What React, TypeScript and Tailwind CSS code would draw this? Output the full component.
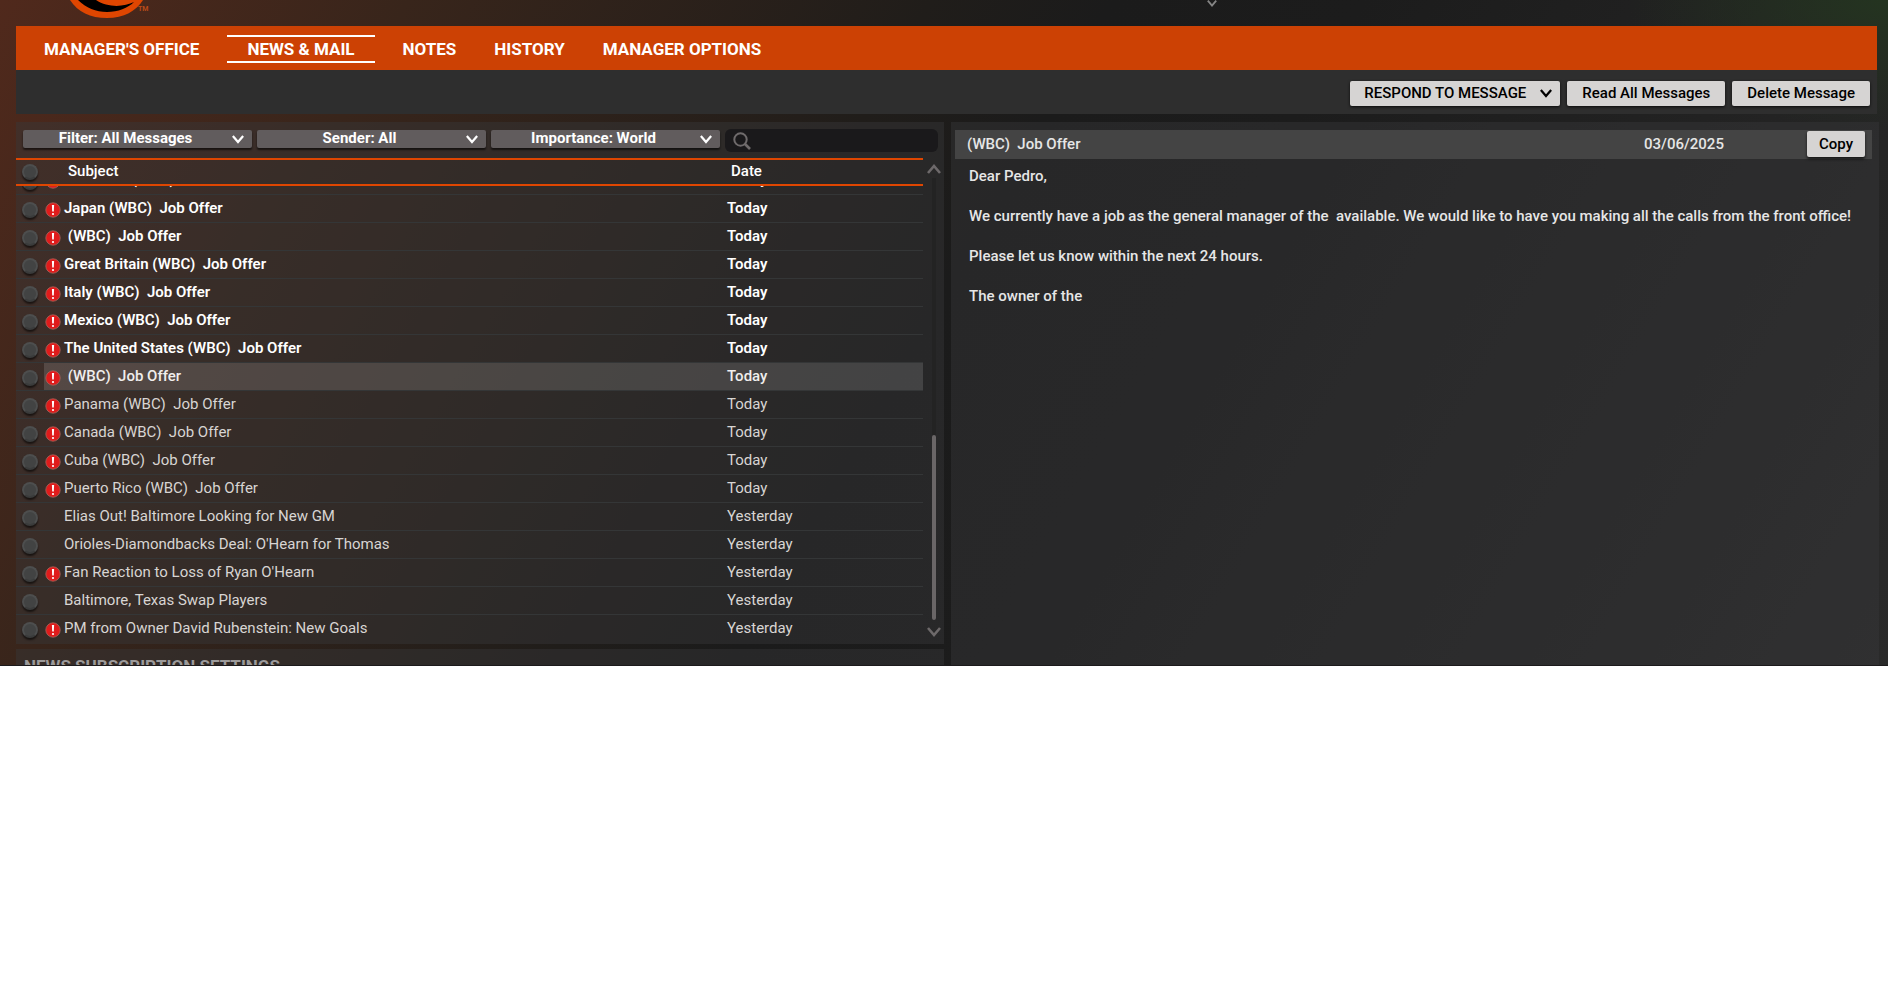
import type { ReactNode } from 'react';

type RowState = 'unread' | 'selected' | 'read';

interface Message {
  subject: string;
  date: string;
  state: RowState;
  urgent: boolean;
}

const messages: Message[] = [
  { subject: 'Japan (WBC)  Job Offer', date: 'Today', state: 'unread', urgent: true },
  { subject: ' (WBC)  Job Offer', date: 'Today', state: 'unread', urgent: true },
  { subject: 'Great Britain (WBC)  Job Offer', date: 'Today', state: 'unread', urgent: true },
  { subject: 'Italy (WBC)  Job Offer', date: 'Today', state: 'unread', urgent: true },
  { subject: 'Mexico (WBC)  Job Offer', date: 'Today', state: 'unread', urgent: true },
  { subject: 'The United States (WBC)  Job Offer', date: 'Today', state: 'unread', urgent: true },
  { subject: ' (WBC)  Job Offer', date: 'Today', state: 'selected', urgent: true },
  { subject: 'Panama (WBC)  Job Offer', date: 'Today', state: 'read', urgent: true },
  { subject: 'Canada (WBC)  Job Offer', date: 'Today', state: 'read', urgent: true },
  { subject: 'Cuba (WBC)  Job Offer', date: 'Today', state: 'read', urgent: true },
  { subject: 'Puerto Rico (WBC)  Job Offer', date: 'Today', state: 'read', urgent: true },
  { subject: 'Elias Out! Baltimore Looking for New GM', date: 'Yesterday', state: 'read', urgent: false },
  { subject: "Orioles-Diamondbacks Deal: O'Hearn for Thomas", date: 'Yesterday', state: 'read', urgent: false },
  { subject: "Fan Reaction to Loss of Ryan O'Hearn", date: 'Yesterday', state: 'read', urgent: true },
  { subject: 'Baltimore, Texas Swap Players', date: 'Yesterday', state: 'read', urgent: false },
  { subject: 'PM from Owner David Rubenstein: New Goals', date: 'Yesterday', state: 'read', urgent: true },
];

const textStyles: Record<RowState, string> = {
  unread: 'font-semibold text-white',
  selected: 'font-medium text-[#f0eeed]',
  read: 'font-normal text-[#d8d5d3]',
};

const tabs = ["MANAGER'S OFFICE", 'NEWS & MAIL', 'NOTES', 'HISTORY', 'MANAGER OPTIONS'];

function Chevron({ up = false, className = '' }: { up?: boolean; className?: string }) {
  return (
    <svg viewBox="0 0 14 10" className={className} fill="none" stroke="currentColor" strokeWidth="2.6" aria-hidden="true">
      <path d={up ? 'M1 9 L7 2 L13 9' : 'M1 1 L7 8 L13 1'} />
    </svg>
  );
}

function RoundCheck({ label }: { label: string }) {
  return (
    <input
      type="checkbox"
      aria-label={label}
      className="block size-4 shrink-0 appearance-none rounded-full border-2 border-[#4d4e4e] border-b-[#3a3b3b] bg-[#424343] shadow-[0_2px_2px_rgba(0,0,0,0.6)] checked:bg-[#cc4104]"
    />
  );
}

function Alert() {
  return (
    <svg viewBox="0 0 16 16" className="size-4 shrink-0" role="img" aria-label="Important">
      <circle cx="8" cy="8" r="7.2" fill="#e01b1b" stroke="#a8665c" strokeWidth="0.8" />
      <path d="M6.9 3 H9.1 L8.8 9.6 H7.2 Z" fill="#fff" />
      <circle cx="8" cy="12" r="1.1" fill="#fff" />
    </svg>
  );
}

/** Logo cut off by the top edge of the scrolled page. */
function TeamLogo() {
  return (
    <svg viewBox="0 0 84 18" className="h-[18px] w-[84px]" role="img" aria-label="Team logo">
      <path d="M2 0 C10 12 22 18 39 18 C56 18 68 11 75 0 Z" fill="#df4601" />
      <path d="M10 0 C18 8 28 12 39 12 C50 12 60 8 66 2 C56 7 40 8 28 0 Z" fill="#000" />
      <text x="70" y="11" fontSize="7" fontFamily="Roboto" fontWeight="700" fill="#b84b18">TM</text>
    </svg>
  );
}

function FilterButton({ children }: { children: ReactNode }) {
  return (
    <button
      type="button"
      className="flex h-[18px] flex-1 items-center rounded-xs bg-[#615c5d] pr-2 text-[15px] leading-4 font-bold text-white shadow-[0_2px_2px_rgba(0,0,0,0.6)]"
    >
      <span className="flex-1 pr-1 pb-[2px]">{children}</span>
      <Chevron className="h-[9px] w-3" />
    </button>
  );
}

function ActionButton({ children }: { children: ReactNode }) {
  return (
    <button
      type="button"
      className="flex h-[25px] items-center rounded-xs bg-[#d6d4d3] px-[15px] text-[15px] leading-5 font-medium whitespace-nowrap text-black shadow-[0_1px_3px_rgba(0,0,0,0.8)]"
    >
      {children}
    </button>
  );
}

function MessageTable() {
  return (
    <table className="min-w-0 flex-1 table-fixed border-collapse text-left text-[15px] leading-5">
      <thead>
        <tr className="h-[26px] border-y-2 border-[#df4601]">
          <th className="w-7 pl-[6px]"><RoundCheck label="Select all messages" /></th>
          <th className="pb-[2px] pl-6 font-medium text-white">Subject</th>
          <th className="w-[212px] pb-[2px] pl-5 font-medium text-white">Date</th>
        </tr>
      </thead>
      <tbody>
        {/* row scrolled under the header, only its lower edge shows */}
        <tr className="border-b border-[#343637]">
          <td className="pl-[6px]">
            <div className="flex h-2 items-end overflow-hidden pb-1"><RoundCheck label="Select message" /></div>
          </td>
          <td className="pl-px">
            <div className="flex h-2 items-end gap-[3px] overflow-hidden pb-[5px] font-semibold whitespace-pre text-white">
              <Alert />
              <span>Colombia (WBC)  Job Offer</span>
            </div>
          </td>
          <td className="pl-4">
            <div className="flex h-2 items-end overflow-hidden pb-[5px] font-semibold text-white">Today</div>
          </td>
        </tr>
        {messages.map((m, i) => {
          const fill = m.state === 'selected' ? 'bg-white/13' : '';
          return (
            <tr key={i} className="h-7 border-b border-[#343637] last:border-b-0">
              <td className="pt-[2px] pl-[6px]"><RoundCheck label={`Select ${m.subject.trim()}`} /></td>
              <td className={`pb-[2px] pl-px ${fill}`}>
                <div className={`flex h-5 items-center gap-[3px] whitespace-pre ${textStyles[m.state]}`}>
                  <span className="flex w-4 pt-1">{m.urgent && <Alert />}</span>
                  {m.subject}
                </div>
              </td>
              <td className={`pb-[2px] pl-4 ${fill} ${textStyles[m.state]}`}>{m.date}</td>
            </tr>
          );
        })}
      </tbody>
    </table>
  );
}

export default function App() {
  return (
    <div className="min-h-screen bg-white font-[Roboto,sans-serif]">
      <div className="flex h-[666px] flex-col overflow-hidden border-b border-[#1c1a1c] bg-[radial-gradient(ellipse_260px_130px_at_100%_0%,#243420,transparent),linear-gradient(120deg,#50291c_0%,#38251b_18%,#201d1a_41%,#1b1b1b_49%,#1c1c1c_60%,#242424_84%,#2a2a2a_100%)] pr-[9px] pl-4">
        <header className="flex h-[26px] items-start justify-between">
          <div className="pl-[52px]"><TeamLogo /></div>
          <Chevron className="mr-[661px] h-[7px] w-3 text-[#858585]" />
        </header>

        <nav className="mr-[2px] flex h-11 shrink-0 items-center bg-[#cc4104] pl-[9px] text-[17px] leading-6 font-bold text-white">
          {tabs.map((tab) => (
            <a
              key={tab}
              href="#"
              className={
                tab === 'NEWS & MAIL'
                  ? 'mx-[9px] mt-px border-y-2 border-white px-5'
                  : 'px-[19px] pt-px'
              }
            >
              {tab}
            </a>
          ))}
        </nav>

        <div className="mr-[2px] flex h-11 shrink-0 items-center justify-end gap-[7px] bg-[#2e2e2e] pt-[2px] pr-[7px]">
          <button
            type="button"
            className="flex h-[25px] items-center gap-[14px] rounded-xs bg-[#d6d4d3] pr-2 pl-[14px] text-[15px] leading-5 font-medium whitespace-nowrap text-black shadow-[0_1px_3px_rgba(0,0,0,0.8)]"
          >
            RESPOND TO MESSAGE
            <Chevron className="h-[9px] w-3" />
          </button>
          <ActionButton>Read All Messages</ActionButton>
          <ActionButton>Delete Message</ActionButton>
        </div>

        <main className="mt-2 grid min-h-0 flex-1 grid-cols-2 gap-[7px]">
          <div className="flex min-w-0 flex-col gap-[5px]">
            <section className="flex h-[522px] shrink-0 flex-col bg-[#38383a]/45">
              <div className="flex h-9 shrink-0 items-start gap-[5px] pt-2 pr-[6px] pl-[7px]">
                <FilterButton>Filter: All Messages</FilterButton>
                <FilterButton>Sender: All</FilterButton>
                <FilterButton>Importance: World</FilterButton>
                <label className="-mt-px flex h-[23px] w-[213px] items-center rounded-md bg-[#1a191b] pl-2 text-[#6f6b6c]">
                  <svg viewBox="0 0 18 18" className="size-[18px]" fill="none" stroke="currentColor" strokeWidth="2" aria-hidden="true">
                    <circle cx="7.5" cy="7.5" r="6.2" />
                    <path d="M12 12 L17 17" strokeWidth="2.6" />
                  </svg>
                  <input type="search" aria-label="Search messages" className="min-w-0 flex-1 bg-transparent px-2 text-[15px] text-white outline-none" />
                </label>
              </div>
              <div className="flex flex-1 items-start">
                <MessageTable />
                <div className="flex w-[21px] flex-col items-center self-stretch pt-[6px] pb-[7px] text-[#6d696a]">
                  <Chevron up className="h-[10px] w-[14px]" />
                  <div className="mt-1 mb-[7px] flex w-1 flex-1 flex-col justify-end bg-[#232323]">
                    <div className="h-[185px] rounded-full bg-[#6a6667]" />
                  </div>
                  <Chevron className="h-[10px] w-[14px]" />
                </div>
              </div>
            </section>
            <section className="flex-1 bg-[#38383a]/45 pt-[5px] pl-2">
              <h2 className="text-[17px] leading-6 font-bold text-[#9c9a9a]">NEWS SUBSCRIPTION SETTINGS</h2>
            </section>
          </div>

          <article className="min-w-0 bg-[#38383a]/45 pt-2 pr-[7px] pl-1 text-[15px] leading-5 font-medium text-[#e6e6e6]">
            <div className="flex h-[29px] items-start bg-[#444444] pt-px pr-[7px] pl-3 leading-[26px]">
              <h1 className="flex-1 whitespace-pre">(WBC)  Job Offer</h1>
              <time className="w-[163px]">03/06/2025</time>
              <button type="button" className="h-[26px] w-[58px] rounded-xs bg-[#d6d4d3] text-black shadow-[0_2px_3px_rgba(0,0,0,0.7)]">
                Copy
              </button>
            </div>
            <div className="flex flex-col gap-5 pt-[7px] pl-[14px] whitespace-pre">
              <p>Dear Pedro,</p>
              <p>We currently have a job as the general manager of the  available. We would like to have you making all the calls from the front office!</p>
              <p>Please let us know within the next 24 hours.</p>
              <p>The owner of the </p>
            </div>
          </article>
        </main>
      </div>
    </div>
  );
}
